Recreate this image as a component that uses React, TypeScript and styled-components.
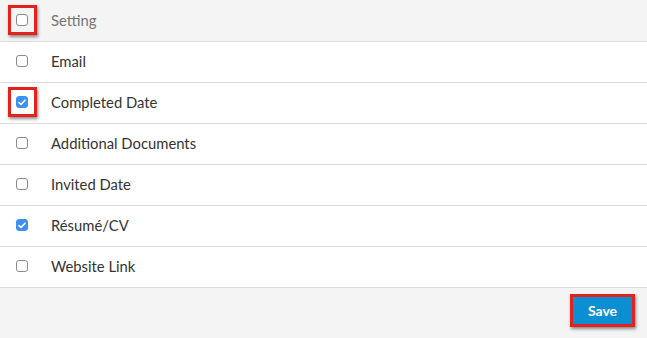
import styled, { createGlobalStyle } from 'styled-components';

const GlobalStyle = createGlobalStyle`
	html, body { margin: 0; padding: 0; background: #fff; }
	body { font-family: Lato, "Open Sans", sans-serif; }
`;

const Panel = styled.div`width: 647px; height: 338px; display: flex; flex-direction: column; background: #fff;`;
const Row = styled.div<{ $header?: boolean }>`
	display: flex;
	align-items: center;
	box-sizing: border-box;
	height: ${(p) => (p.$header ? '42px' : '41px')};
	padding-bottom: 2px;
	border-bottom: 1px solid #dcdcdc;
	background: ${(p) => (p.$header ? '#f4f4f4' : '#fff')};
	color: ${(p) => (p.$header ? '#747474' : '#333')};
	font-size: 14.8px;
`;
const CheckCell = styled.div`
	width: 44px;
	display: flex;
	justify-content: center;
	align-items: center;
`;
const Highlight = styled.span<{ $on?: boolean }>`
	display: flex;
	justify-content: center;
	align-items: center;
	width: 23px;
	height: 24px;
	border: 3px solid ${(p) => (p.$on ? '#e3211d' : 'transparent')};
	box-shadow: ${(p) => (p.$on ? '1px 2px 3px rgba(0,0,0,0.45)' : 'none')};
`;
const Box = styled.span<{ $checked?: boolean }>`
	width: 12px;
	height: 12px;
	box-sizing: border-box;
	border-radius: 3px;
	border: 1px solid ${(p) => (p.$checked ? '#3d8ff2' : '#8a8a8a')};
	background: ${(p) => (p.$checked ? '#3d8ff2' : '#fff')};
	display: flex;
	align-items: center;
	justify-content: center;
`;
const Label = styled.span`margin-left: 7px;`;
const Footer = styled.div`
	flex: 1;
	background: #f4f4f4;
	display: flex;
	justify-content: flex-end;
	align-items: center;
	padding: 0 12px 5px 0;
`;
const SaveWrap = styled.span`
	border: 3px solid #e3211d;
	box-shadow: 1px 2px 3px rgba(0,0,0,0.45);
	display: flex;
`;
const SaveButton = styled.button`
	width: 59px;
	height: 27px;
	border: none;
	background: #0b8fd2;
	color: #fff;
	font-family: Lato, sans-serif;
	font-weight: 700;
	font-size: 14px;
	padding: 0;
`;

interface CheckProps {
	checked?: boolean;
	marked?: boolean;
}

const Check: React.FC<CheckProps> = ({ checked, marked }) => (
	<CheckCell>
		<Highlight $on={marked}>
			<Box $checked={checked}>
				{checked && (
					<svg width="8" height="7" viewBox="0 0 8 7">
						<path d="M1 3.6 L3 5.5 L7 1.2" stroke="#fff" strokeWidth="1.6" fill="none" strokeLinecap="round" strokeLinejoin="round" />
					</svg>
				)}
			</Box>
		</Highlight>
	</CheckCell>
);

const settings = [
	{ name: 'Email', checked: false, marked: false },
	{ name: 'Completed Date', checked: true, marked: true },
	{ name: 'Additional Documents', checked: false, marked: false },
	{ name: 'Invited Date', checked: false, marked: false },
	{ name: 'Résumé/CV', checked: true, marked: false },
	{ name: 'Website Link', checked: false, marked: false },
];

export default function App() {
	return (
		<>
			<GlobalStyle />
			<Panel>
				<Row $header>
					<Check marked />
					<Label>Setting</Label>
				</Row>
				{settings.map((s) => (
					<Row key={s.name}>
						<Check checked={s.checked} marked={s.marked} />
						<Label>{s.name}</Label>
					</Row>
				))}
				<Footer>
					<SaveWrap>
						<SaveButton>Save</SaveButton>
					</SaveWrap>
				</Footer>
			</Panel>
		</>
	);
}
